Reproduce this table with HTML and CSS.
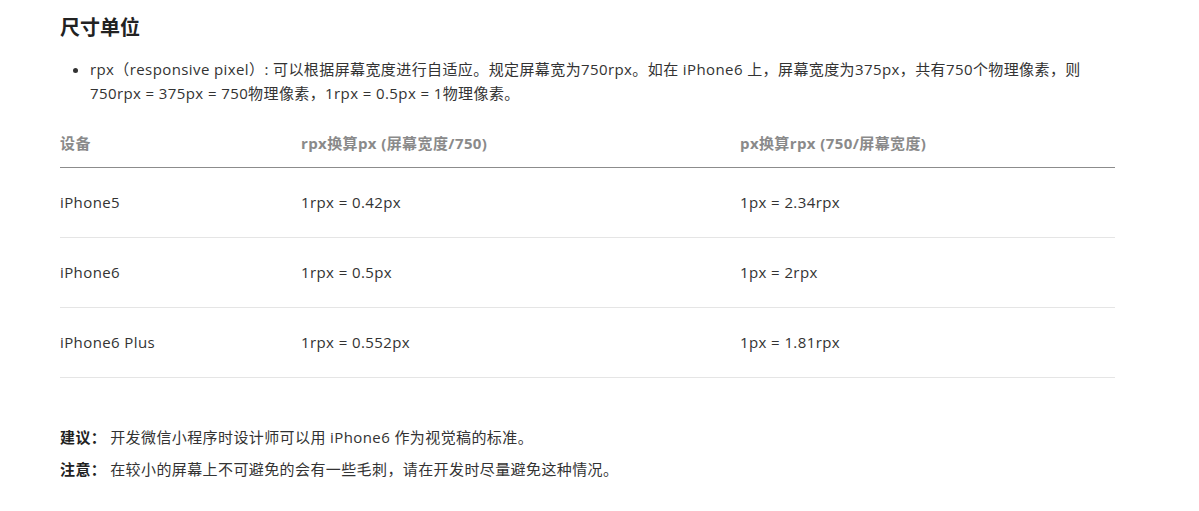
FILE: index.html
```html
<!DOCTYPE html>
<html lang="zh-CN">
<head>
<meta charset="utf-8">
<title>尺寸单位</title>
<link rel="stylesheet" href="styles.css">
</head>
<body>
<div class="doc">
  <h2 class="title">尺寸单位</h2>
  <ul class="list">
    <li>rpx（responsive pixel）: 可以根据屏幕宽度进行自适应。规定屏幕宽为750rpx。如在 iPhone6 上，屏幕宽度为375px，共有750个物理像素，则750rpx = 375px = 750物理像素，1rpx = 0.5px = 1物理像素。</li>
  </ul>
  <table class="grid">
    <colgroup>
      <col class="c1"><col class="c2"><col class="c3">
    </colgroup>
    <thead>
      <tr><th>设备</th><th>rpx换算px (屏幕宽度/750)</th><th>px换算rpx (750/屏幕宽度)</th></tr>
    </thead>
    <tbody>
      <tr><td>iPhone5</td><td>1rpx = 0.42px</td><td>1px = 2.34rpx</td></tr>
      <tr><td>iPhone6</td><td>1rpx = 0.5px</td><td>1px = 2rpx</td></tr>
      <tr><td>iPhone6 Plus</td><td>1rpx = 0.552px</td><td>1px = 1.81rpx</td></tr>
    </tbody>
  </table>
  <p class="note first"><strong>建议：</strong>开发微信小程序时设计师可以用 iPhone6 作为视觉稿的标准。</p>
  <p class="note"><strong>注意：</strong>在较小的屏幕上不可避免的会有一些毛刺，请在开发时尽量避免这种情况。</p>
</div>
</body>
</html>
```

FILE: styles.css
```css
html, body {
  margin: 0;
  padding: 0;
  background: #fff;
}
body {
  font-family: "Open Sans", "Noto Sans CJK SC", sans-serif;
  font-size: 15px;
  letter-spacing: 0.4px;
  color: #333;
}
.doc {
  padding: 14px 0 0 60px;
  width: 1055px;
}
.title {
  margin: 0;
  font-size: 20px;
  line-height: 28px;
  font-weight: 700;
  letter-spacing: 0;
  color: #222;
}
.list {
  margin: 15px 0 0;
  padding-left: 30px;
  line-height: 24px;
}
.grid {
  margin-top: 14px;
  width: 1055px;
  border-collapse: collapse;
  table-layout: fixed;
}
.c1 { width: 241px; }
.c2 { width: 439px; }
.c3 { width: 375px; }
.grid th {
  text-align: left;
  font-weight: 700;
  color: #8a8a8a;
  padding: 12px 0;
  line-height: 24px;
  border-bottom: 1px solid #8c8c8c;
}
.grid td {
  padding: 22px 0 23px;
  line-height: 24px;
  border-bottom: 1px solid #e5e5e5;
}
.note {
  margin: 8px 0 0;
  line-height: 24px;
}
.note.first {
  margin-top: 47px;
}
.note strong {
  font-weight: 700;
  color: #222;
  margin-right: 4px;
}
```
